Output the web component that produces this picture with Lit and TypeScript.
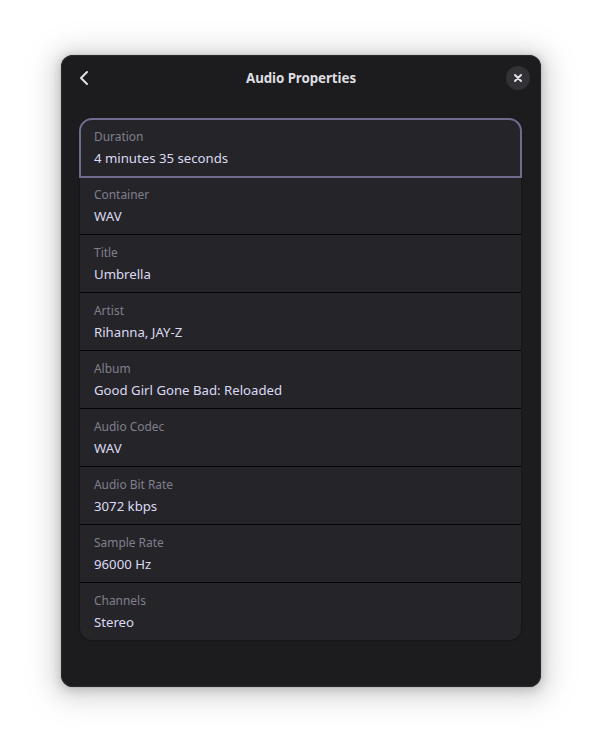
import { LitElement, html, css } from "lit";
import { customElement } from "lit/decorators.js";

const rows = [
  ["Duration", "4 minutes 35 seconds"],
  ["Container", "WAV"],
  ["Title", "Umbrella"],
  ["Artist", "Rihanna, JAY-Z"],
  ["Album", "Good Girl Gone Bad: Reloaded"],
  ["Audio Codec", "WAV"],
  ["Audio Bit Rate", "3072 kbps"],
  ["Sample Rate", "96000 Hz"],
  ["Channels", "Stereo"],
];

@customElement("app-root")
export class AppRoot extends LitElement {
  static styles = css`
    :host { display: block; box-sizing: border-box; height: 754px; padding: 55px 61px 67px; background: #fff; font-family: "Noto Sans", sans-serif; overflow: hidden; }
    * { box-sizing: border-box; }
    .window { width: 480px; height: 632px; border-radius: 12px; background: #1c1c1e; box-shadow: inset 0 0 0 1px #29292b, 0 2px 8px 2px rgba(0,0,0,.15), 0 3px 20px 10px rgba(0,0,0,.09), 0 4px 36px 14px rgba(0,0,0,.05), 0 0 0 1px rgba(0,0,0,.05); }
    header { display: grid; grid-template-columns: 34px 1fr 34px; align-items: center; height: 46px; padding: 0 6px; }
    button { display: grid; place-items: center; border: 0; padding: 0; background: none; color: #e2e1e4; }
    .back { width: 34px; height: 34px; }
    .close { width: 24px; height: 24px; border-radius: 50%; background: #323135; justify-self: center; }
    h1 { margin: 0; text-align: center; font-size: 13.333px; letter-spacing: -.07px; line-height: 18px; font-weight: 700; color: #dfdee1; }
    .list { margin: 18px 20px 0 19px; border-radius: 12px; background: #252529; box-shadow: 0 0 0 1px rgba(0,0,0,.12), 0 1px 3px 1px rgba(0,0,0,.07); }
    .row { height: 58px; padding: 8px 14px 0; border-bottom: 1px solid #050507; color: #dcdaf3; }
    .row:last-child { height: 57px; border-bottom: 0; }
    .row.selected { outline: 2px solid #706c90; outline-offset: -1px; border-color: transparent; border-radius: 12px 12px 0 0; }
    .label { font-size: 11.93px; line-height: 18px; color: #817f8d; }
    .value { font-size: 13.2px; line-height: 18px; margin-top: 4px; }
  `;
  render() {
    return html`<section class="window">
      <header>
        <button class="back" aria-label="Back">
          <svg width="16" height="16" viewBox="0 0 16 16" fill="none" stroke="currentColor" stroke-width="2" stroke-linecap="round" stroke-linejoin="round"><path d="M11 2 5 8l6 6"/></svg>
        </button>
        <h1>Audio Properties</h1>
        <button class="close" aria-label="Close">
          <svg width="16" height="16" viewBox="0 0 16 16" fill="none" stroke="currentColor" stroke-width="2" stroke-linecap="round"><path d="m5 5 6 6m0-6-6 6"/></svg>
        </button>
      </header>
      <div class="list">
        ${rows.map(([label, value], i) => html`<div class="row ${i === 0 ? "selected" : ""}"><div class="label">${label}</div><div class="value">${value}</div></div>`)}
      </div>
    </section>`;
  }
}
